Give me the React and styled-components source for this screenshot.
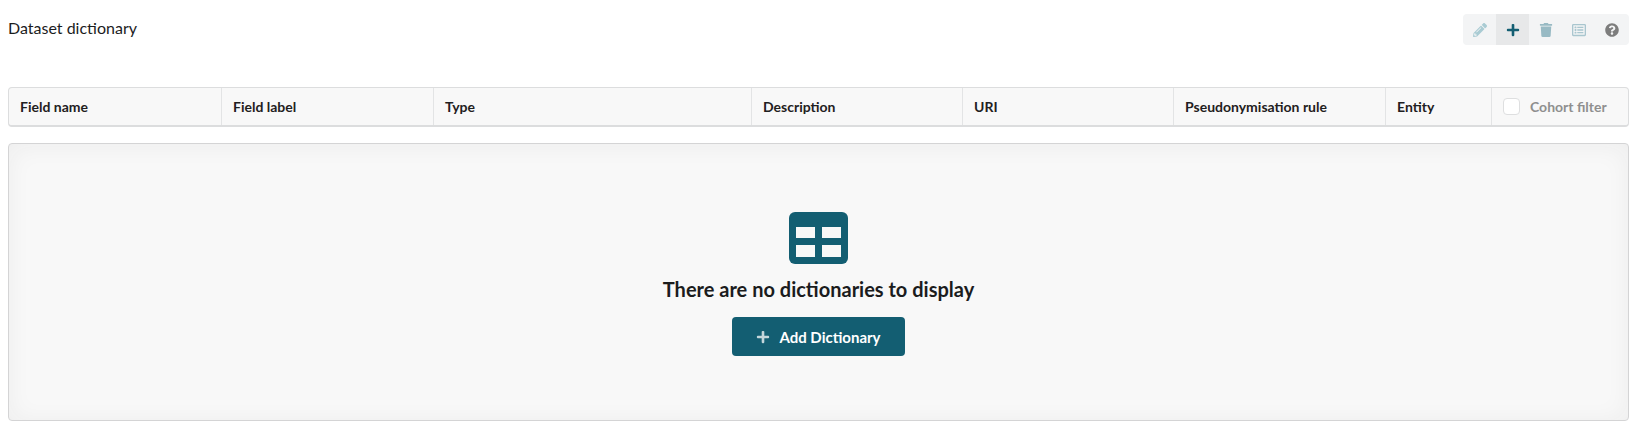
import React from "react";
import styled, { createGlobalStyle } from "styled-components";
import { FaPencilAlt, FaPlus, FaTrash, FaRegListAlt, FaQuestionCircle } from "react-icons/fa";

const Global = createGlobalStyle`
  html, body { margin: 0; padding: 0; background: #fff; }
  body { font-family: Lato, "Open Sans", "Liberation Sans", sans-serif; color: #1b1c1d; }
`;

const Page = styled.div`
  width: 1637px;
  height: 432px;
  box-sizing: border-box;
  padding: 14px 8px 0;
  overflow: hidden;
`;

const TopBar = styled.div`
  display: flex;
  justify-content: space-between;
  align-items: flex-start;
  height: 73px;
`;

const Title = styled.h1`
  margin: 0;
  font-size: 16px;
  font-weight: 400;
  line-height: 28px;
  color: #1b1c1d;
`;

const Toolbar = styled.div`
  display: flex;
  width: 166px;
  height: 31px;
  border-radius: 4px;
  overflow: hidden;
  background: #f3f4f5;
`;

const ToolButton = styled.div`
  flex: 1;
  display: flex;
  align-items: center;
  justify-content: center;
  font-size: 14px;
  color: ${(p) => p.$color};
  background: ${(p) => (p.$active ? "#e7e8e9" : "transparent")};
`;

const HeaderRow = styled.div`
  display: grid;
  grid-template-columns: 212px 212px 318px 211px 211px 212px 106px 1fr;
  height: 40px;
  box-sizing: border-box;
  border: 1px solid #dcddde;
  border-bottom-width: 2px;
  border-radius: 4px;
  background: #f9fafb;
  background: #f8f8f8;
`;

const HeaderCell = styled.div`
  display: flex;
  align-items: center;
  padding-left: 11px;
  font-size: 14px;
  font-weight: 700;
  color: #1f2021;
  border-left: ${(p) => (p.$first ? "none" : "1px solid #e3e4e5")};
`;

const CohortCell = styled(HeaderCell)`
  gap: 10px;
  font-weight: 700;
  color: #8f8f8f;
`;

const CheckBox = styled.span`
  width: 17px;
  height: 17px;
  box-sizing: border-box;
  background: #fff;
  border: 1px solid #dedfe0;
  border-radius: 4px;
`;

const EmptyPanel = styled.div`
  margin-top: 16px;
  height: 278px;
  box-sizing: border-box;
  display: flex;
  flex-direction: column;
  align-items: center;
  padding-top: 68px;
  background: #f8f8f8;
  border: 1px solid #d4d4d5;
  border-radius: 4px;
  box-shadow: inset 0 2px 25px 0 rgba(34, 36, 38, 0.05);
`;

const Message = styled.div`
  margin-top: 11px;
  font-size: 20px;
  font-weight: 700;
  line-height: 28px;
  color: #1b1c1d;
`;

const AddButton = styled.button`
  margin-top: 14px;
  width: 173px;
  height: 39px;
  display: flex;
  align-items: center;
  justify-content: center;
  gap: 9px;
  border: none;
  border-radius: 4px;
  background: #135e72;
  color: #fff;
  font-family: inherit;
  font-size: 15px;
  font-weight: 700;
  svg { opacity: 0.75; font-size: 14px; }
`;

const columns = ["Field name", "Field label", "Type", "Description", "URI", "Pseudonymisation rule", "Entity"];

function TableIcon() {
  return (
    <svg width="59" height="52" viewBox="0 0 59 52" aria-hidden="true">
      <rect width="59" height="52" rx="6" fill="#135e72" />
      <rect x="7" y="15" width="19" height="11" fill="#f8f8f8" />
      <rect x="33" y="15" width="19" height="11" fill="#f8f8f8" />
      <rect x="7" y="33" width="19" height="12" fill="#f8f8f8" />
      <rect x="33" y="33" width="19" height="12" fill="#f8f8f8" />
    </svg>
  );
}

export default function App() {
  return (
    <Page>
      <Global />
      <TopBar>
        <Title>Dataset dictionary</Title>
        <Toolbar>
          <ToolButton $color="#a9cbd3"><FaPencilAlt /></ToolButton>
          <ToolButton $color="#135e72" $active><FaPlus /></ToolButton>
          <ToolButton $color="#98bac4"><FaTrash /></ToolButton>
          <ToolButton $color="#a9c6cf"><FaRegListAlt /></ToolButton>
          <ToolButton $color="#7d7d7d"><FaQuestionCircle /></ToolButton>
        </Toolbar>
      </TopBar>
      <HeaderRow>
        {columns.map((c, i) => (
          <HeaderCell key={c} $first={i === 0}>{c}</HeaderCell>
        ))}
        <CohortCell><CheckBox />Cohort filter</CohortCell>
      </HeaderRow>
      <EmptyPanel>
        <TableIcon />
        <Message>There are no dictionaries to display</Message>
        <AddButton><FaPlus />Add Dictionary</AddButton>
      </EmptyPanel>
    </Page>
  );
}
